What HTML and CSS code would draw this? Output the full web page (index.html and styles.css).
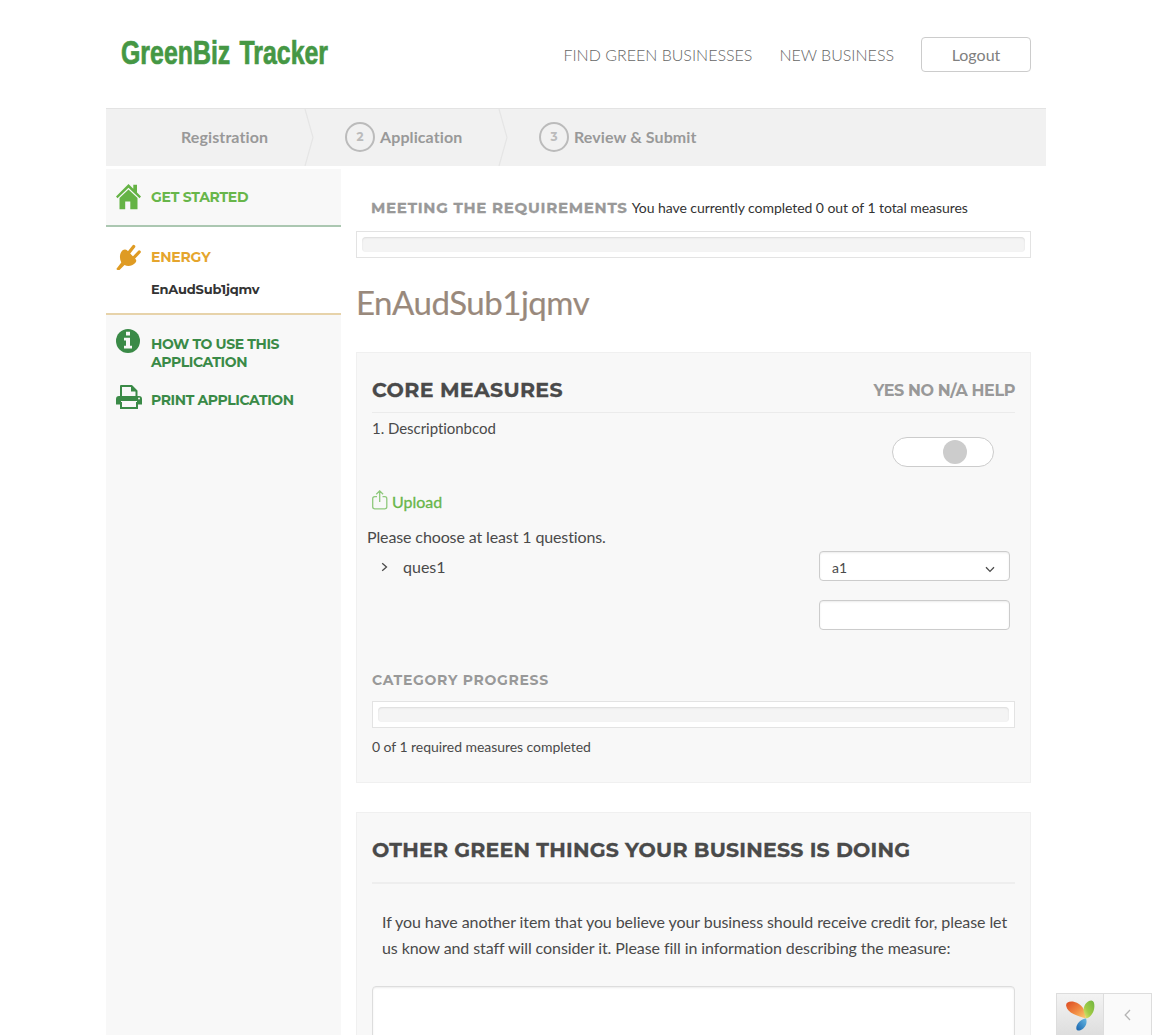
FILE: index.html
```html
<!DOCTYPE html>
<html lang="en">
<head>
<meta charset="utf-8">
<title>GreenBiz Tracker</title>
<link rel="stylesheet" href="styles.css">
</head>
<body>
<div class="page">
  <header class="header">
    <svg class="logo" width="220" height="44" viewBox="0 0 220 44"><text x="1" y="27" textLength="207" lengthAdjust="spacingAndGlyphs">GreenBiz Tracker</text></svg>
    <nav class="nav">
      <a class="nav-link find"><span>FIND GREEN BUSINESSES</span></a>
      <a class="nav-link new"><span>NEW BUSINESS</span></a>
      <a class="logout"><span>Logout</span></a>
    </nav>
  </header>

  <div class="steps">
    <div class="step first"><span>Registration</span></div>
    <svg class="step-arrow" width="10" height="57" viewBox="0 0 10 57"><path d="M1 0 9 28.500 1 57"/></svg>
    <div class="step"><i class="num">2</i><span>Application</span></div>
    <svg class="step-arrow" width="10" height="57" viewBox="0 0 10 57"><path d="M1 0 9 28.500 1 57"/></svg>
    <div class="step"><i class="num">3</i><span>Review &amp; Submit</span></div>
  </div>

  <div class="columns">
    <aside class="sidebar">
      <div class="side-item start">
        <svg width="25" height="26" viewBox="0 0 25 26" fill="#65b345"><path d="M12.500 0 0 12.500l1.500 1.800L12.500 3.800 23.500 14.300 25 12.500 21 8.500V.8h-3.700v4z"/><path d="M12.500 5.500 3.500 14v11.300h5.700v-7.800h5.100v7.800h7.200V14z"/></svg>
        <span class="side-text">GET STARTED</span>
      </div>
      <div class="side-item energy">
        <svg width="25" height="26" viewBox="0 0 25 26" fill="#df9b23"><path d="M13 8.500 17.700 2.500M18 13.500 23.200 8" stroke="#df9b23" stroke-width="3.200" stroke-linecap="round"/><path d="M6.300 6.500c2-1.500 3.700-1.300 5 0l8.200 8.500c1.200 1.300 1 2.700-.3 4-3.200 3.300-7.500 3.600-10.700 2L2.500 27 .3 25l5-6.500C3.200 14.500 3.500 9.500 6.300 6.500z"/></svg>
        <div>
          <span class="side-text">ENERGY</span>
          <span class="side-sub">EnAudSub1jqmv</span>
        </div>
      </div>
      <div class="side-item howto">
        <svg width="25" height="24" viewBox="0 0 25 24"><circle cx="12" cy="12" r="12" fill="#3a8a47"/><path d="M10 2.800h4v3.800h-4zM8 8.800h6v8h2v2.700H8v-2.700h2v-5.300H8z" fill="#f8f8f8"/></svg>
        <span class="side-text">HOW TO USE THIS<br>APPLICATION</span>
      </div>
      <div class="side-item print">
        <svg width="26" height="24" viewBox="0 0 26 24"><path d="M5 11V1h10.500L20.500 6v5" fill="none" stroke="#3a8a47" stroke-width="2" stroke-linejoin="round"/><path d="M15 1v5.500h5.500z" fill="#3a8a47"/><path d="M3 11h20q3 0 3 3v5.500h-5V16H5v3.500H0V14q0-3 3-3z" fill="#3a8a47"/><circle cx="23" cy="13.500" r="1" fill="#f8f8f8"/><path d="M5 17v6h16v-6" fill="none" stroke="#3a8a47" stroke-width="2"/></svg>
        <span class="side-text">PRINT APPLICATION</span>
      </div>
    </aside>

    <main class="main">
      <div class="requirements"><b class="req-title">MEETING THE REQUIREMENTS</b><span class="req-text">You have currently completed 0 out of 1 total measures</span></div>
      <div class="progress"><div class="track"></div></div>
      <h1 class="title"><span>EnAudSub1jqmv</span></h1>

      <section class="panel core">
        <div class="panel-head">
          <h2 class="heading core-heading">CORE MEASURES</h2>
          <span class="options">YES NO N/A HELP</span>
        </div>
        <div class="measure">
          <span class="desc">1. Descriptionbcod</span>
          <div class="toggle"><i class="knob"></i></div>
        </div>
        <div class="upload">
          <svg width="16" height="20" viewBox="0 0 16 20" fill="none" stroke="#8fc97c" stroke-width="1.300"><path d="M5 6.700H2.700Q.7 6.700.7 8.700v8.100q0 2 2 2h10.100q2 0 2-2V8.700q0-2-2-2H10.500M7.700 12V1M4.300 4.300 7.700.9l3.400 3.400"/></svg>
          <span>Upload</span>
        </div>
        <div class="choose"><span>Please choose at least 1 questions.</span></div>
        <div class="question">
          <svg width="7" height="10" viewBox="0 0 7 10" fill="none" stroke="#4a4a4a" stroke-width="1.300"><path d="M1.200 1.200 5.500 5 1.200 8.800"/></svg>
          <span class="q-name">ques1</span>
          <div class="fields">
            <div class="field"><span>a1</span><svg width="10" height="7" viewBox="0 0 10 7" fill="none" stroke="#4a4a4a" stroke-width="1.300"><path d="M1 1.200 5 5.400 9 1.200"/></svg></div>
            <div class="field"></div>
          </div>
        </div>
        <div class="cat-title"><span>CATEGORY PROGRESS</span></div>
        <div class="progress"><div class="track"></div></div>
        <div class="cat-note"><span>0 of 1 required measures completed</span></div>
      </section>

      <section class="panel other">
        <h2 class="heading other-heading"><span>OTHER GREEN THINGS YOUR BUSINESS IS DOING</span></h2>
        <p class="other-text">If you have another item that you believe your business should receive credit for, please let<br>us know and staff will consider it. Please fill in information describing the measure:</p>
        <div class="textarea"></div>
      </section>
    </main>
  </div>
</div>

<div class="debugbar">
  <div class="debug-logo">
    <svg width="30" height="32" viewBox="0 0 30 32">
      <defs>
        <linearGradient id="o" x1="0" y1="0" x2="1" y2="1"><stop offset="0" stop-color="#dc4a22"/><stop offset=".55" stop-color="#f18a42"/><stop offset="1" stop-color="#fcd070"/></linearGradient>
        <linearGradient id="g" x1="1" y1="0" x2="0" y2="1"><stop offset="0" stop-color="#6fb43f"/><stop offset=".6" stop-color="#a1cb45"/><stop offset="1" stop-color="#eee67a"/></linearGradient>
        <linearGradient id="b" x1="0" y1="1" x2="1" y2="0"><stop offset="0" stop-color="#1763ad"/><stop offset="1" stop-color="#69b9e3"/></linearGradient>
      </defs>
      <path d="M.2 6C-.5 2.500 3.500.8 8.500 2 15 3.500 19.500 9 20 18.500 16 17 11 16 7.500 14 3.500 12 .8 9.500.2 6z" fill="url(#o)"/>
      <path d="M25.500.5C20.500.8 17 6 17.700 11.500L20.200 18.500C26 17 29 10 28.300 4.500 28 2 27.300.8 25.500.5z" fill="url(#g)"/>
      <path d="M20 18.500C15.500 19 10 23.500 10.300 28.500c.2 2.800 3.500 2.400 6 .7C20 26.700 21.500 22.500 20 18.500z" fill="url(#b)"/>
    </svg>
  </div>
  <div class="debug-toggle"><svg width="7" height="12" viewBox="0 0 7 12" fill="none" stroke="#b5b5b5" stroke-width="1.300"><path d="M6 1 1.200 6 6 11"/></svg></div>
</div>
</body>
</html>
```
FILE: styles.css
```css
* { box-sizing: border-box; }
body { margin: 0; height: 1035px; overflow: hidden; background: #fff; color: #4a4a4a; font-family: Lato, sans-serif; font-size: 16px; }
svg { display: block; flex: none; }
.page { width: 940px; margin: 0 auto; height: 1035px; overflow: hidden; display: flex; flex-direction: column; }

.header { height: 108px; flex: none; display: flex; justify-content: space-between; align-items: flex-start; padding: 37px 15px 0 14px; }
.logo { overflow: visible; }
.logo text { font-family: "Liberation Sans Narrow", "Liberation Sans", sans-serif; font-weight: 700; font-size: 33px; word-spacing: 3px; fill: #459744; stroke: #459744; stroke-width: .7px; }
.nav { display: flex; align-items: center; height: 35px; color: #666; font-weight: 300; font-size: 16px; }
.nav-link { position: relative; top: 0; }
.find { margin-right: 27px; }
.new { margin-right: 27px; }
.logout { width: 110px; height: 35px; border: 1px solid #ccc; border-radius: 4px; display: flex; align-items: center; justify-content: center; font-weight: 400; color: #808080; }

.steps { height: 58px; flex: none; display: flex; background: #f1f1f1; border-top: 1px solid #e3e3e3; color: #999; font-weight: 700; font-size: 16px; letter-spacing: .1px; }
.step { display: flex; align-items: center; width: 184px; padding-left: 31px; padding-bottom: 2px; gap: 5px; white-space: nowrap; }
.step.first { width: 198px; padding-left: 75px; }
.step-arrow { fill: none; stroke: #e5e5e5; stroke-width: 1.200; }
.num { width: 30px; height: 30px; flex: none; border: 2px solid #bbb; border-radius: 50%; display: flex; align-items: center; justify-content: center; font-family: Montserrat, Inter, sans-serif; font-style: normal; font-size: 12px; color: #bbb; }

.columns { flex: 1; display: flex; padding-top: 3px; min-height: 0; }
.sidebar { width: 235px; background: #f8f8f8; font-family: Montserrat, Inter, sans-serif; font-weight: 700; font-size: 14px; line-height: 18px; letter-spacing: -.4px; }
.side-item { display: flex; align-items: flex-start; gap: 10px; padding-left: 10px; }
.side-text { display: block; }
.start { height: 58px; border-bottom: 2px solid #abc7b1; padding-top: 15px; color: #68b64a; letter-spacing: -.27px; }
.start .side-text { padding-top: 4px; }
.energy { height: 88px; border-bottom: 2px solid #e7d3aa; background: #fff; padding-top: 17px; color: #e5a52d; letter-spacing: -.2px; }
.energy .side-text { padding-top: 4px; }
.side-sub { display: block; padding-top: 14px; font-size: 13px; color: #333; letter-spacing: -.17px; }
.howto { padding-top: 14px; height: 70px; color: #3a8a47; }
.howto .side-text { padding-top: 6px; }
.print { color: #3a8a47; gap: 9px; }
.print .side-text { padding-top: 6px; }

.main { flex: 1; padding: 0 15px; overflow: hidden; }
.requirements { height: 62px; padding: 28px 0 0 15px; display: flex; align-items: baseline; gap: 4px; line-height: 22px; white-space: nowrap; }
.req-title { font-family: Montserrat, Inter, sans-serif; font-weight: 700; font-size: 15px; letter-spacing: .73px; color: #999; -webkit-text-stroke: .3px #999; }
.req-text { font-size: 14px; color: #333; letter-spacing: -.055px; }
.progress { height: 27px; border: 1px solid #e3e3e3; background: #fff; padding: 5px; }
.track { height: 15px; border-radius: 4px; background: #f4f4f4; box-shadow: inset 0 1px 2px rgba(0, 0, 0, .1); }
.title { margin: 0; height: 94px; padding-top: 24px; line-height: 40px; font-weight: 400; font-size: 33px; letter-spacing: -.48px; color: #99897c; -webkit-text-stroke: .2px #99897c; }
.panel { background: #f8f8f8; border: 1px solid #f0f0f0; padding: 0 15px; }
.core { height: 431px; margin-bottom: 29px; }
.heading { margin: 0; font-family: Montserrat, Inter, sans-serif; font-weight: 700; font-size: 20.5px; letter-spacing: .35px; line-height: 24px; white-space: nowrap; -webkit-text-stroke: .3px #4a4a4a; }
.panel-head { height: 60px; border-bottom: 1px solid #ebebeb; display: flex; justify-content: space-between; padding-top: 25px; }
.options { font-family: Montserrat, Inter, sans-serif; font-weight: 700; font-size: 16px; line-height: 24px; letter-spacing: -.4px; padding-top: 1px; color: #999; }
.measure { height: 77px; display: flex; justify-content: space-between; align-items: flex-start; padding: 24px 21px 0 0; }
.desc { margin-top: -19px; line-height: 20px; font-size: 15px; letter-spacing: -.04px; }
.toggle { width: 102px; height: 30px; border: 1px solid #ccc; border-radius: 15px; background: #fff; padding: 2px 0 0 50px; }
.knob { display: block; width: 24px; height: 24px; border-radius: 50%; background: #ccc; }
.upload { height: 36px; display: flex; gap: 4px; color: #68b64a; line-height: 24px; -webkit-text-stroke: .3px #68b64a; }
.choose { margin-left: -5px; height: 25px; line-height: 20px; padding-top: 1px; letter-spacing: -.12px; }
.question { display: flex; align-items: flex-start; height: 117px; }
.question > svg { margin: 11px 15px 0 9px; }
.q-name { margin-top: 6px; line-height: 20px; }
.fields { margin-left: auto; margin-right: 5px; display: flex; flex-direction: column; gap: 19px; }
.field { width: 191px; height: 30px; border: 1px solid #ccc; border-radius: 4px; background: #fff; box-shadow: inset 0 1px 2px rgba(0, 0, 0, .08); display: flex; align-items: center; justify-content: space-between; padding: 3px 14px 0 12px; font-size: 14px; }
.field svg { margin-top: 4px; }
.cat-title { height: 33px; padding-top: 2px; font-family: Montserrat, Inter, sans-serif; font-weight: 700; font-size: 14px; letter-spacing: .7px; line-height: 20px; color: #999; }
.cat-note { padding-top: 9px; font-size: 14px; line-height: 20px; letter-spacing: -.05px; }
.other-heading { height: 71px; border-bottom: 2px solid #eee; padding-top: 25px; letter-spacing: .22px; }
.other-text { margin: 25px 0 0 10px; line-height: 26px; letter-spacing: -.08px; white-space: nowrap; }
.textarea { height: 80px; margin-top: 25px; border: 1px solid #ddd; border-radius: 4px; background: #fff; box-shadow: inset 0 1px 2px rgba(0, 0, 0, .08); }

.debugbar { position: fixed; right: 0; bottom: 0; width: 96px; height: 42px; border: 1px solid #ddd; border-bottom: 0; display: flex; background: #fafafa; }
.debug-logo { width: 47px; border-right: 1px solid #ddd; background: linear-gradient(#f3f3f3, #dedede); padding: 6px 0 0 9px; }
.debug-toggle { flex: 1; display: flex; align-items: center; justify-content: center; padding-top: 1px; }
```
